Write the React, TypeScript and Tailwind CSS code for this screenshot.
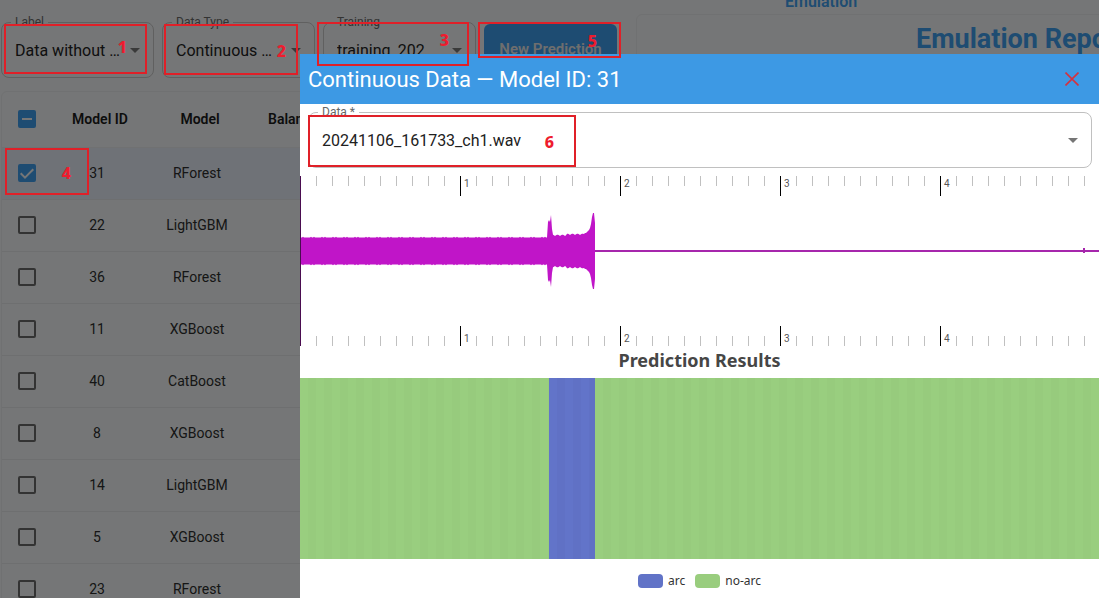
import { useState } from "react";
import type { ReactNode } from "react";

const models = [
  { id: 31, model: "RForest" },
  { id: 22, model: "LightGBM" },
  { id: 36, model: "RForest" },
  { id: 11, model: "XGBoost" },
  { id: 40, model: "CatBoost" },
  { id: 8, model: "XGBoost" },
  { id: 14, model: "LightGBM" },
  { id: 5, model: "XGBoost" },
  { id: 23, model: "RForest" },
];

const filters = [
  { id: "label", label: "Label", value: "Data without …" },
  { id: "data-type", label: "Data Type", value: "Continuous …" },
  { id: "training", label: "Training", value: "training_202" },
];

type SelectFieldProps = {
  id: string;
  label: string;
  value: string;
  className?: string;
};

const SelectField = ({ id, label, value, className = "" }: SelectFieldProps) => (
  <fieldset className={`relative h-14 rounded-lg border border-[#c0c0c0] ${className}`}>
    <label
      htmlFor={id}
      className="absolute -top-[9px] left-[9px] bg-inherit px-1 text-xs leading-4 text-[#666666]"
    >
      {label}
    </label>
    <select
      id={id}
      className="h-full w-full appearance-none rounded-lg bg-transparent pt-0.5 pl-[13px] pr-8 text-base text-[#212121] outline-none"
    >
      <option>{value}</option>
    </select>
    <svg
      viewBox="0 0 10 5"
      className="pointer-events-none absolute right-[13px] top-[25px] h-[5px] w-[10px] fill-[#757575]"
    >
      <path d="M0 0h10L5 5z" />
    </svg>
  </fieldset>
);

type CheckboxProps = {
  label: string;
  checked: boolean;
  indeterminate?: boolean;
  onChange: () => void;
};

const Checkbox = ({ label, checked, indeterminate, onChange }: CheckboxProps) => (
  <span className="relative block h-[18px] w-[18px]">
    <input
      type="checkbox"
      aria-label={label}
      checked={checked}
      onChange={onChange}
      className="block h-[18px] w-[18px] appearance-none rounded-xs border-2 border-[#666666] checked:border-[#3d99e4] checked:bg-[#3d99e4]"
    />
    {checked && (
      <svg
        viewBox="0 0 18 18"
        className="pointer-events-none absolute inset-0 fill-none stroke-[#ebedee] stroke-2"
      >
        <path d={indeterminate ? "M4 9h10" : "M2.7 9.3l4.3 4.3L15.3 5.3"} />
      </svg>
    )}
  </span>
);

const ModelTable = () => {
  const [selected, setSelected] = useState<number[]>([31]);

  const toggle = (id: number) => {
    setSelected((prev) => (prev.includes(id) ? prev.filter((x) => x !== id) : [...prev, id]));
  };

  return (
    <div className="overflow-hidden rounded-md border border-[#e0e2e4]">
      <table className="w-full table-fixed border-collapse text-center text-sm text-[#2c2c2c]">
        <thead>
          <tr className="h-[55px] border-b border-[#e0e2e4] text-[#1a1a1a]">
            <th className="w-[45px] pl-4">
              <Checkbox
                label="Select all"
                checked={selected.length > 0}
                indeterminate={selected.length < models.length}
                onChange={() => setSelected([])}
              />
            </th>
            <th className="w-[100px] pl-1.5 font-semibold">Model ID</th>
            <th className="w-[100px] pl-1.5 font-semibold">Model</th>
            <th className="pl-[21px] text-left font-semibold">Balanced</th>
          </tr>
        </thead>
        <tbody>
          {models.map(({ id, model }) => (
            <tr
              key={id}
              className={`h-[52px] border-b border-[#dcdee0] ${selected.includes(id) ? "bg-[#dfe5ef]" : ""}`}
            >
              <td className="pl-4">
                <Checkbox
                  label={`Select model ${id}`}
                  checked={selected.includes(id)}
                  onChange={() => toggle(id)}
                />
              </td>
              <td>{id}</td>
              <td>{model}</td>
              <td />
            </tr>
          ))}
        </tbody>
      </table>
    </div>
  );
};

// 160px per second, one minor tick every 0.1s
const PX_PER_SECOND = 160;
const ticks = Array.from({ length: 49 }, (_, i) => i + 1);

const Timeline = ({ bottom = false }: { bottom?: boolean }) => (
  <svg className="block h-5 w-full overflow-hidden" shapeRendering="crispEdges">
    {ticks.map((tick) => {
      const major = tick % 10 === 0;
      const length = major ? 20 : 10;
      const x = (tick * PX_PER_SECOND) / 10;
      return (
        <g key={tick}>
          <rect
            x={x}
            y={bottom ? 20 - length : 0}
            width={1}
            height={length}
            className={major ? "fill-black" : "fill-[#c0c0c0]"}
          />
          {major && (
            <text x={x + 4} y={bottom ? 16 : 11} className="fill-[#555555] text-[10px]">
              {tick / 10}
            </text>
          )}
        </g>
      );
    })}
  </svg>
);

// Half height of the signal envelope at a given pixel
const amplitude = (x: number) => {
  if (x < 248) return 13.5 + ((x * x * 31 + x * 17) % 11 < 2 ? 0.8 : 0);
  if (x < 253) return [29, 31, 29, 36, 22][x - 248];
  if (x < 284) return 15 + ((x * x * 7) % 5) * 0.4 + (x > 266 ? 1 : 0);
  if (x < 296) return [17, 18, 18, 19, 20, 21, 23, 27, 34, 38, 38, 28][x - 284];
  return 1;
};

const WAVE_CENTER = 75;

const Waveform = () => {
  const xs = Array.from({ length: 296 }, (_, x) => x);
  const top = xs.map((x) => `${x},${WAVE_CENTER - amplitude(x)}`);
  const low = xs.map((x) => `${x},${WAVE_CENTER + amplitude(x)}`).reverse();

  return (
    <div>
      <Timeline />
      <svg className="-my-5 block h-[170px] w-full overflow-hidden fill-[#c015c8]">
        <polygon points={[...top, ...low].join(" ")} />
        <rect x="295" y="74" width="100%" height="2" className="fill-[#a626ac]" />
        <rect x="783" y="72" width="2" height="5" className="fill-[#a626ac]" />
        <rect width="1" height="170" className="fill-[#4a0c50]" />
      </svg>
      <Timeline bottom />
    </div>
  );
};

const greenStripes =
  "bg-[repeating-linear-gradient(90deg,#99ce7f_0px,#99ce7f_8px,#97cb7d_8px,#97cb7d_16px)]";
const blueStripes =
  "bg-[repeating-linear-gradient(90deg,#6274c9_0px,#6274c9_8px,#6071c5_8px,#6071c5_16px)]";

const PredictionResults = () => (
  <section className="font-['Noto_Sans','Open_Sans',sans-serif]">
    <h3 className="pb-1 text-center text-lg leading-7 font-bold text-[#464646]">
      Prediction Results
    </h3>
    <div className="flex h-[181px]">
      <div className={`w-[249px] ${greenStripes}`} />
      <div className={`w-[46px] ${blueStripes}`} />
      <div className={`flex-1 ${greenStripes}`} />
    </div>
    <ul className="mt-3.5 flex justify-center gap-2.5 text-xs leading-4 text-[#333333]">
      <li className="flex items-center gap-[5px]">
        <span className="h-3.5 w-[25px] rounded bg-[#6173c7]" />
        arc
      </li>
      <li className="flex items-center gap-[5px]">
        <span className="h-3.5 w-[25px] rounded bg-[#99cd7e]" />
        no-arc
      </li>
    </ul>
  </section>
);

const DataDialog = () => (
  <div
    role="dialog"
    aria-labelledby="dialog-title"
    className="absolute top-[54px] right-0 bottom-0 left-[300px] overflow-hidden bg-white"
  >
    <header className="flex h-[50px] items-center justify-between bg-[#3d99e4] pr-5 pl-2">
      <h2 id="dialog-title" className="text-[22px] text-white">
        Continuous Data — Model ID: 31
      </h2>
      <button aria-label="Close">
        <svg viewBox="0 0 14 14" className="h-3.5 w-3.5 fill-none stroke-[#d3323f] stroke-[1.6]">
          <path d="M0.5 0.5l13 13M13.5 0.5l-13 13" />
        </svg>
      </button>
    </header>
    <div className="py-2 pr-[7px] pl-2">
      <SelectField id="data" label="Data *" value="20241106_161733_ch1.wav" className="bg-white" />
    </div>
    <Waveform />
    <PredictionResults />
  </div>
);

// Numbered callout drawn over the page
const Callout = ({ className, children }: { className: string; children: ReactNode }) => (
  <div
    className={`pointer-events-none absolute flex items-center justify-end border-2 border-[#e02028] pt-0.5 font-['Noto_Sans','Open_Sans',sans-serif] text-base leading-5 font-extrabold text-[#ee1c2e] ${className}`}
  >
    {children}
  </div>
);

const App = () => {
  return (
    <div className="relative h-screen overflow-hidden bg-[#ebedee] font-[Roboto,sans-serif]">
      <div className="flex">
        <div className="w-[628px] shrink-0 pl-px">
          <div className="flex gap-2 pt-[22px] pb-[13px]">
            {filters.map((filter) => (
              <SelectField key={filter.id} {...filter} className="w-[153px] bg-[#ebedee]" />
            ))}
            <button className="mt-0.5 h-[50px] w-[133px] rounded-md bg-[#3d99e4] text-[15px] font-semibold text-[#dddddd]">
              New Prediction
            </button>
          </div>
          <ModelTable />
        </div>
        <div className="ml-2 min-w-[800px] flex-1">
          <p className="-mt-2.5 pl-[149px] text-base leading-6 font-semibold text-[#3d99e4]">
            Emulation
          </p>
          <div className="h-screen rounded-md border border-[#e0e2e4] pt-2 pl-[279px]">
            <h1 className="text-[27px] leading-8 font-bold text-[#3d99e4]">Emulation Report</h1>
          </div>
        </div>
      </div>

      <div className="absolute inset-0 bg-black/50" />
      <DataDialog />

      <Callout className="top-[24px] left-[4px] h-[50px] w-[143px] pr-[18px] pb-1.5">1</Callout>
      <Callout className="top-[24px] left-[164px] h-[51px] w-[134px] pr-2.5">2</Callout>
      <Callout className="top-[22px] left-[317px] h-[44px] w-[152px] pr-[18px] pb-2.5">3</Callout>
      <Callout className="top-[148px] left-[5px] h-[47px] w-[84px] pr-4">4</Callout>
      <Callout className="top-[22px] left-[478px] h-[36px] w-[143px] pr-[22px]">5</Callout>
      <Callout className="top-[115px] left-[308px] h-[52px] w-[268px] pr-5">6</Callout>
    </div>
  );
};

export default App;
